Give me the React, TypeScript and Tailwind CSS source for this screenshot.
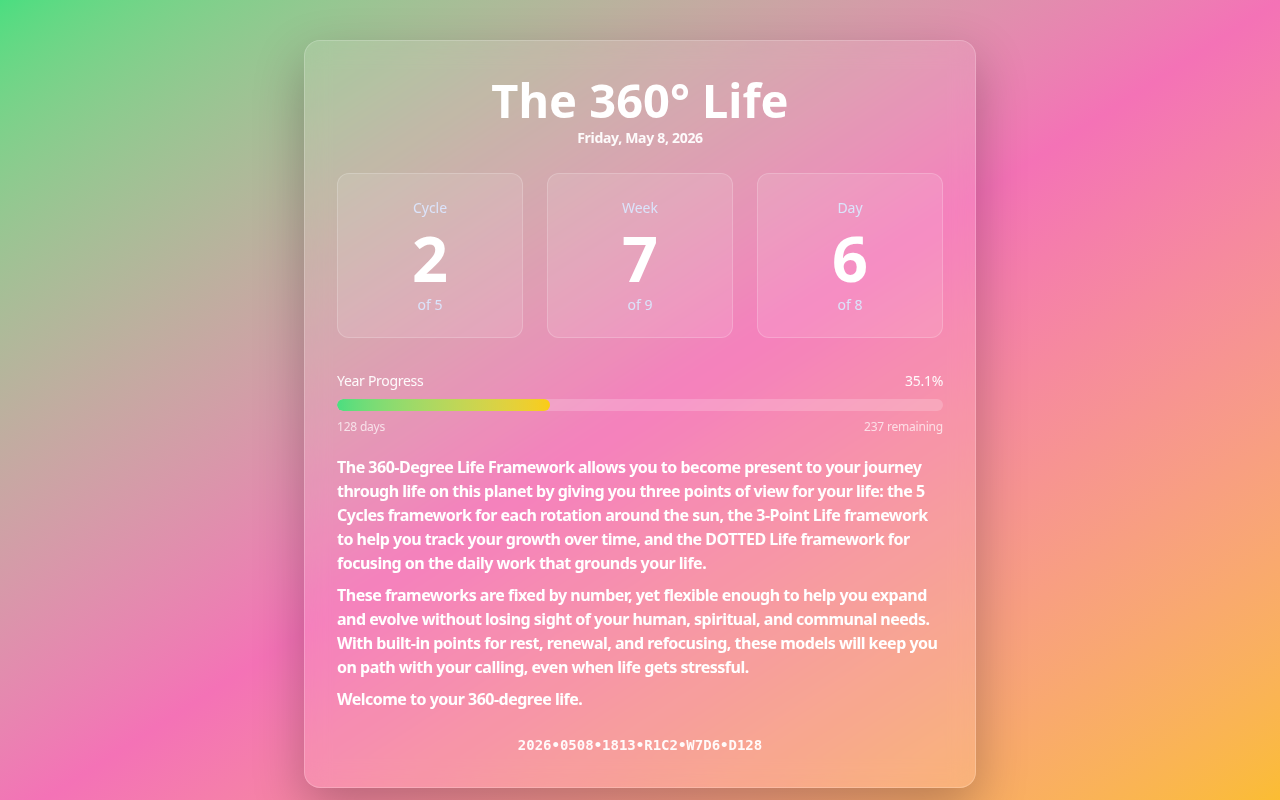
import React from 'react'

const STATS = [
  { label: 'Cycle', value: 2, total: 5 },
  { label: 'Week', value: 7, total: 9 },
  { label: 'Day', value: 6, total: 8 },
]

const PROGRESS = 35.1

export default function App() {
  return (
    <div
      className="min-h-[800px] w-full bg-linear-to-br from-[#4ade80] via-[#f472b6] to-[#fbbf24] flex justify-center py-10 text-white"
      style={{ fontFamily: '"Noto Sans", "Open Sans", sans-serif' }}
    >
      <div className="w-[672px] rounded-2xl border border-white/20 bg-white/10 backdrop-blur-md shadow-[0_20px_50px_rgba(0,0,0,0.25)] p-8">
        {/* Header */}
        <div className="text-center mt-[3px]">
          <h1 className="text-[47px] leading-[48px] font-bold">The 360° Life</h1>
          <p className="text-sm font-bold text-white/95 tracking-[-0.3px] mt-1">Friday, May 8, 2026</p>
        </div>

        {/* Cycle / Week / Day */}
        <div className="grid grid-cols-3 gap-6 mt-[25px]">
          {STATS.map((s) => (
            <div
              key={s.label}
              className="rounded-xl border border-white/20 bg-white/10 p-6 pb-[22px] flex flex-col items-center"
            >
              <div className="text-sm leading-5 text-[#dbe4fb]">{s.label}</div>
              <div className="text-[63px] leading-[64px] font-bold mt-2">{s.value}</div>
              <div className="text-sm leading-5 text-[#dbe4fb] mt-[5px]">of {s.total}</div>
            </div>
          ))}
        </div>

        {/* Year progress */}
        <div className="mt-[33px]">
          <div className="flex justify-between text-sm leading-5 text-white/95 tracking-[-0.3px]">
            <span>Year Progress</span>
            <span>{PROGRESS}%</span>
          </div>
          <div className="mt-2 h-3 rounded-full bg-white/20 overflow-hidden">
            <div
              className="h-full rounded-full bg-linear-to-r from-[#4ade80] to-[#facc15]"
              style={{ width: `${PROGRESS}%` }}
            />
          </div>
          <div className="mt-2 flex justify-between text-xs leading-4 text-white/70 tracking-[-0.2px]">
            <span>128 days</span>
            <span>237 remaining</span>
          </div>
        </div>

        {/* Copy */}
        <div className="mt-5 text-base leading-6 font-bold space-y-2 tracking-[-0.5px]">
          <p>
            The 360-Degree Life Framework allows you to become present to your journey through life on this
            planet by giving you three points of view for your life: the 5 Cycles framework for each rotation
            around the sun, the 3-Point Life framework to help you track your growth over time, and the DOTTED
            Life framework for focusing on the daily work that grounds your life.
          </p>
          <p>
            These frameworks are fixed by number, yet flexible enough to help you expand and evolve without
            losing sight of your human, spiritual, and communal needs. With built-in points for rest, renewal,
            and refocusing, these models will keep you on path with your calling, even when life gets stressful.
          </p>
          <p>Welcome to your 360-degree life.</p>
        </div>

        <div
          className="mt-6 text-center text-sm leading-5 font-bold text-white/95"
          style={{ fontFamily: '"DejaVu Sans Mono", "Liberation Mono", monospace' }}
        >
          2026•0508•1813•R1C2•W7D6•D128
        </div>
      </div>
    </div>
  )
}
